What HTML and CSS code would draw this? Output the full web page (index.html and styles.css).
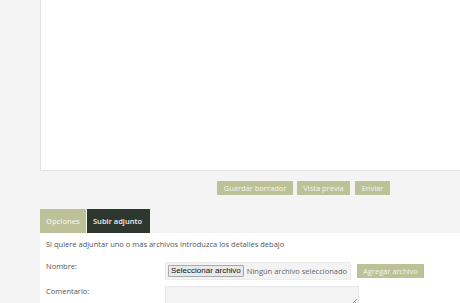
FILE: index.html
```html
<!DOCTYPE html>
<html lang="es">
<head>
<meta charset="utf-8">
<title>Mensaje</title>
<link rel="stylesheet" href="styles.css">
</head>
<body>
<div class="page">
  <div class="editor"></div>
  <div class="actions">
    <button class="btn btn-save">Guardar borrador</button>
    <button class="btn btn-preview">Vista previa</button>
    <button class="btn btn-send">Enviar</button>
  </div>
  <div class="tabs">
    <div class="tab tab-light">Opciones</div>
    <div class="tab tab-dark">Subir adjunto</div>
  </div>
  <div class="panel">
    <p class="intro">Si quiere adjuntar uno o más archivos introduzca los detalles debajo</p>
    <div class="row row-name">
      <label class="label">Nombre:</label>
      <div class="field">
        <div class="file">
          <span class="file-btn">Seleccionar archivo</span>
          <span class="file-text">Ningún archivo seleccionado</span>
        </div>
        <button class="btn btn-add">Agregar archivo</button>
      </div>
    </div>
    <div class="row row-comment">
      <label class="label">Comentario:</label>
      <div class="field">
        <div class="textarea"><span class="grip"></span></div>
      </div>
    </div>
  </div>
</div>
</body>
</html>
```
FILE: styles.css
```css
html, body {
  margin: 0;
  padding: 0;
}
body {
  background: #f4f4f4;
  font-family: "Open Sans", "DejaVu Sans", sans-serif;
  color: #555;
  width: 460px;
  height: 303px;
  overflow: hidden;
}
.page {
  display: flex;
  flex-direction: column;
}
.editor {
  margin-left: 40px;
  height: 170px;
  background: #fff;
  border-left: 1px solid #e4e4e4;
  border-bottom: 1px solid #e4e4e4;
}
.actions {
  display: flex;
  gap: 4px;
  margin-top: 10px;
  padding-left: 217px;
}
.btn {
  border: 0;
  margin: 0;
  background: #bcc198;
  color: #f4f5ec;
  font-family: "Open Sans", "DejaVu Sans", sans-serif;
  font-size: 7.5px;
  height: 14px;
  padding: 0 6px;
  line-height: 14px;
  text-align: center;
}
.btn-save {
  width: 76px;
}
.btn-preview {
  width: 53px;
}
.btn-send {
  width: 35px;
  margin-left: 1px;
}
.tabs {
  display: flex;
  margin-top: 14px;
  margin-left: 40px;
  gap: 1px;
}
.tab {
  height: 24px;
  line-height: 24px;
  font-size: 7.5px;
  font-weight: 600;
  padding: 0 6px;
}
.tab-light {
  background: #bcc198;
  color: #eef0e2;
  width: 34px;
}
.tab-dark {
  background: #2d372e;
  color: #f2f2f2;
  width: 51px;
}
.panel {
  margin-left: 40px;
  background: #fff;
  padding: 6px 0 0 6px;
  height: 64px;
  overflow: hidden;
}
.intro {
  margin: 0;
  font-size: 7.5px;
  line-height: 11px;
  color: #555;
}
.row {
  display: flex;
}
.row-name {
  margin-top: 12px;
}
.row-comment {
  margin-top: 6px;
}
.label {
  width: 119px;
  font-size: 7.5px;
  line-height: 11px;
  color: #555;
}
.row-name .label {
  margin-top: -1px;
}
.field {
  display: flex;
  align-items: flex-start;
}
.file {
  display: flex;
  align-items: center;
  gap: 3px;
  background: #f3f3f3;
  border: 1px solid #ececec;
  height: 16px;
  padding: 0 3px 0 2px;
}
.file-btn {
  font-family: "Liberation Sans", Arial, sans-serif;
  font-size: 8px;
  color: #111;
  background: #e9e9e9;
  border: 1px solid #a9a9a9;
  border-radius: 1px;
  height: 10px;
  line-height: 10px;
  padding: 0 2px;
}
.file-text {
  font-size: 7.5px;
  color: #666;
}
.btn-add {
  margin-left: 6px;
  margin-top: 2px;
}
.textarea {
  position: relative;
  width: 192px;
  height: 30px;
  background: #f3f3f3;
  border: 1px solid #e6e6e6;
}
.grip {
  position: absolute;
  right: 1px;
  top: 12px;
  width: 5px;
  height: 5px;
  background: linear-gradient(135deg, transparent 45%, #999 45%, #999 55%, transparent 55%, transparent 70%, #999 70%, #999 80%, transparent 80%);
}
```
